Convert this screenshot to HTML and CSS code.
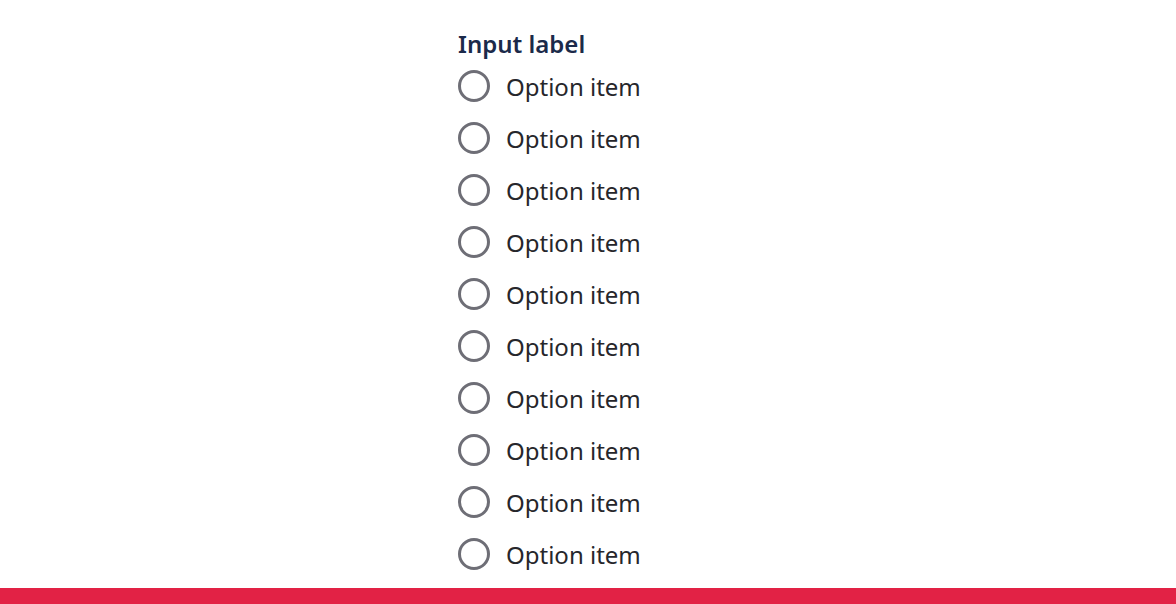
FILE: index.html
```html
<!DOCTYPE html>
<html lang="en">
<head>
    <meta charset="UTF-8">
    <meta name="viewport" content="width=device-width, initial-scale=1.0">
    <title>Radio group</title>
    <link rel="stylesheet" href="styles.css">
</head>
<body>
    <main class="page">
        <fieldset class="radio-group">
            <legend class="group-label">Input label</legend>
            <label class="option"><input type="radio" name="opt"><span class="mark"></span>Option item</label>
            <label class="option"><input type="radio" name="opt"><span class="mark"></span>Option item</label>
            <label class="option"><input type="radio" name="opt"><span class="mark"></span>Option item</label>
            <label class="option"><input type="radio" name="opt"><span class="mark"></span>Option item</label>
            <label class="option"><input type="radio" name="opt"><span class="mark"></span>Option item</label>
            <label class="option"><input type="radio" name="opt"><span class="mark"></span>Option item</label>
            <label class="option"><input type="radio" name="opt"><span class="mark"></span>Option item</label>
            <label class="option"><input type="radio" name="opt"><span class="mark"></span>Option item</label>
            <label class="option"><input type="radio" name="opt"><span class="mark"></span>Option item</label>
            <label class="option"><input type="radio" name="opt"><span class="mark"></span>Option item</label>
        </fieldset>
    </main>
    <footer class="bottom-bar"></footer>
</body>
</html>
```

FILE: styles.css
```css
* {
    margin: 0;
    padding: 0;
    box-sizing: border-box;
}

body {
    height: 604px;
    overflow: hidden;
    background: #fff;
    font-family: 'Noto Sans', 'Open Sans', sans-serif;
    display: flex;
    flex-direction: column;
}

.page {
    flex: 1;
    min-height: 0;
    display: flex;
    justify-content: center;
    padding-top: 26px;
}

.radio-group {
    border: none;
    width: 260px;
}

.group-label {
    font-size: 24px;
    font-weight: 600;
    line-height: 32px;
    color: #1b2a4a;
    padding-top: 2px;
    margin-bottom: 10px;
}

.option {
    display: flex;
    align-items: center;
    gap: 16px;
    height: 32px;
    margin-bottom: 20px;
    font-size: 24px;
    color: #26262b;
    cursor: pointer;
}

.option input {
    display: none;
}

.mark {
    flex-shrink: 0;
    width: 32px;
    height: 32px;
    border: 3px solid #6e6e76;
    border-radius: 50%;
}

.option input:checked + .mark {
    border-color: #1b2a4a;
    box-shadow: inset 0 0 0 5px #fff, inset 0 0 0 12px #1b2a4a;
}

.bottom-bar {
    flex-shrink: 0;
    height: 16px;
    background: #e22245;
}
```
